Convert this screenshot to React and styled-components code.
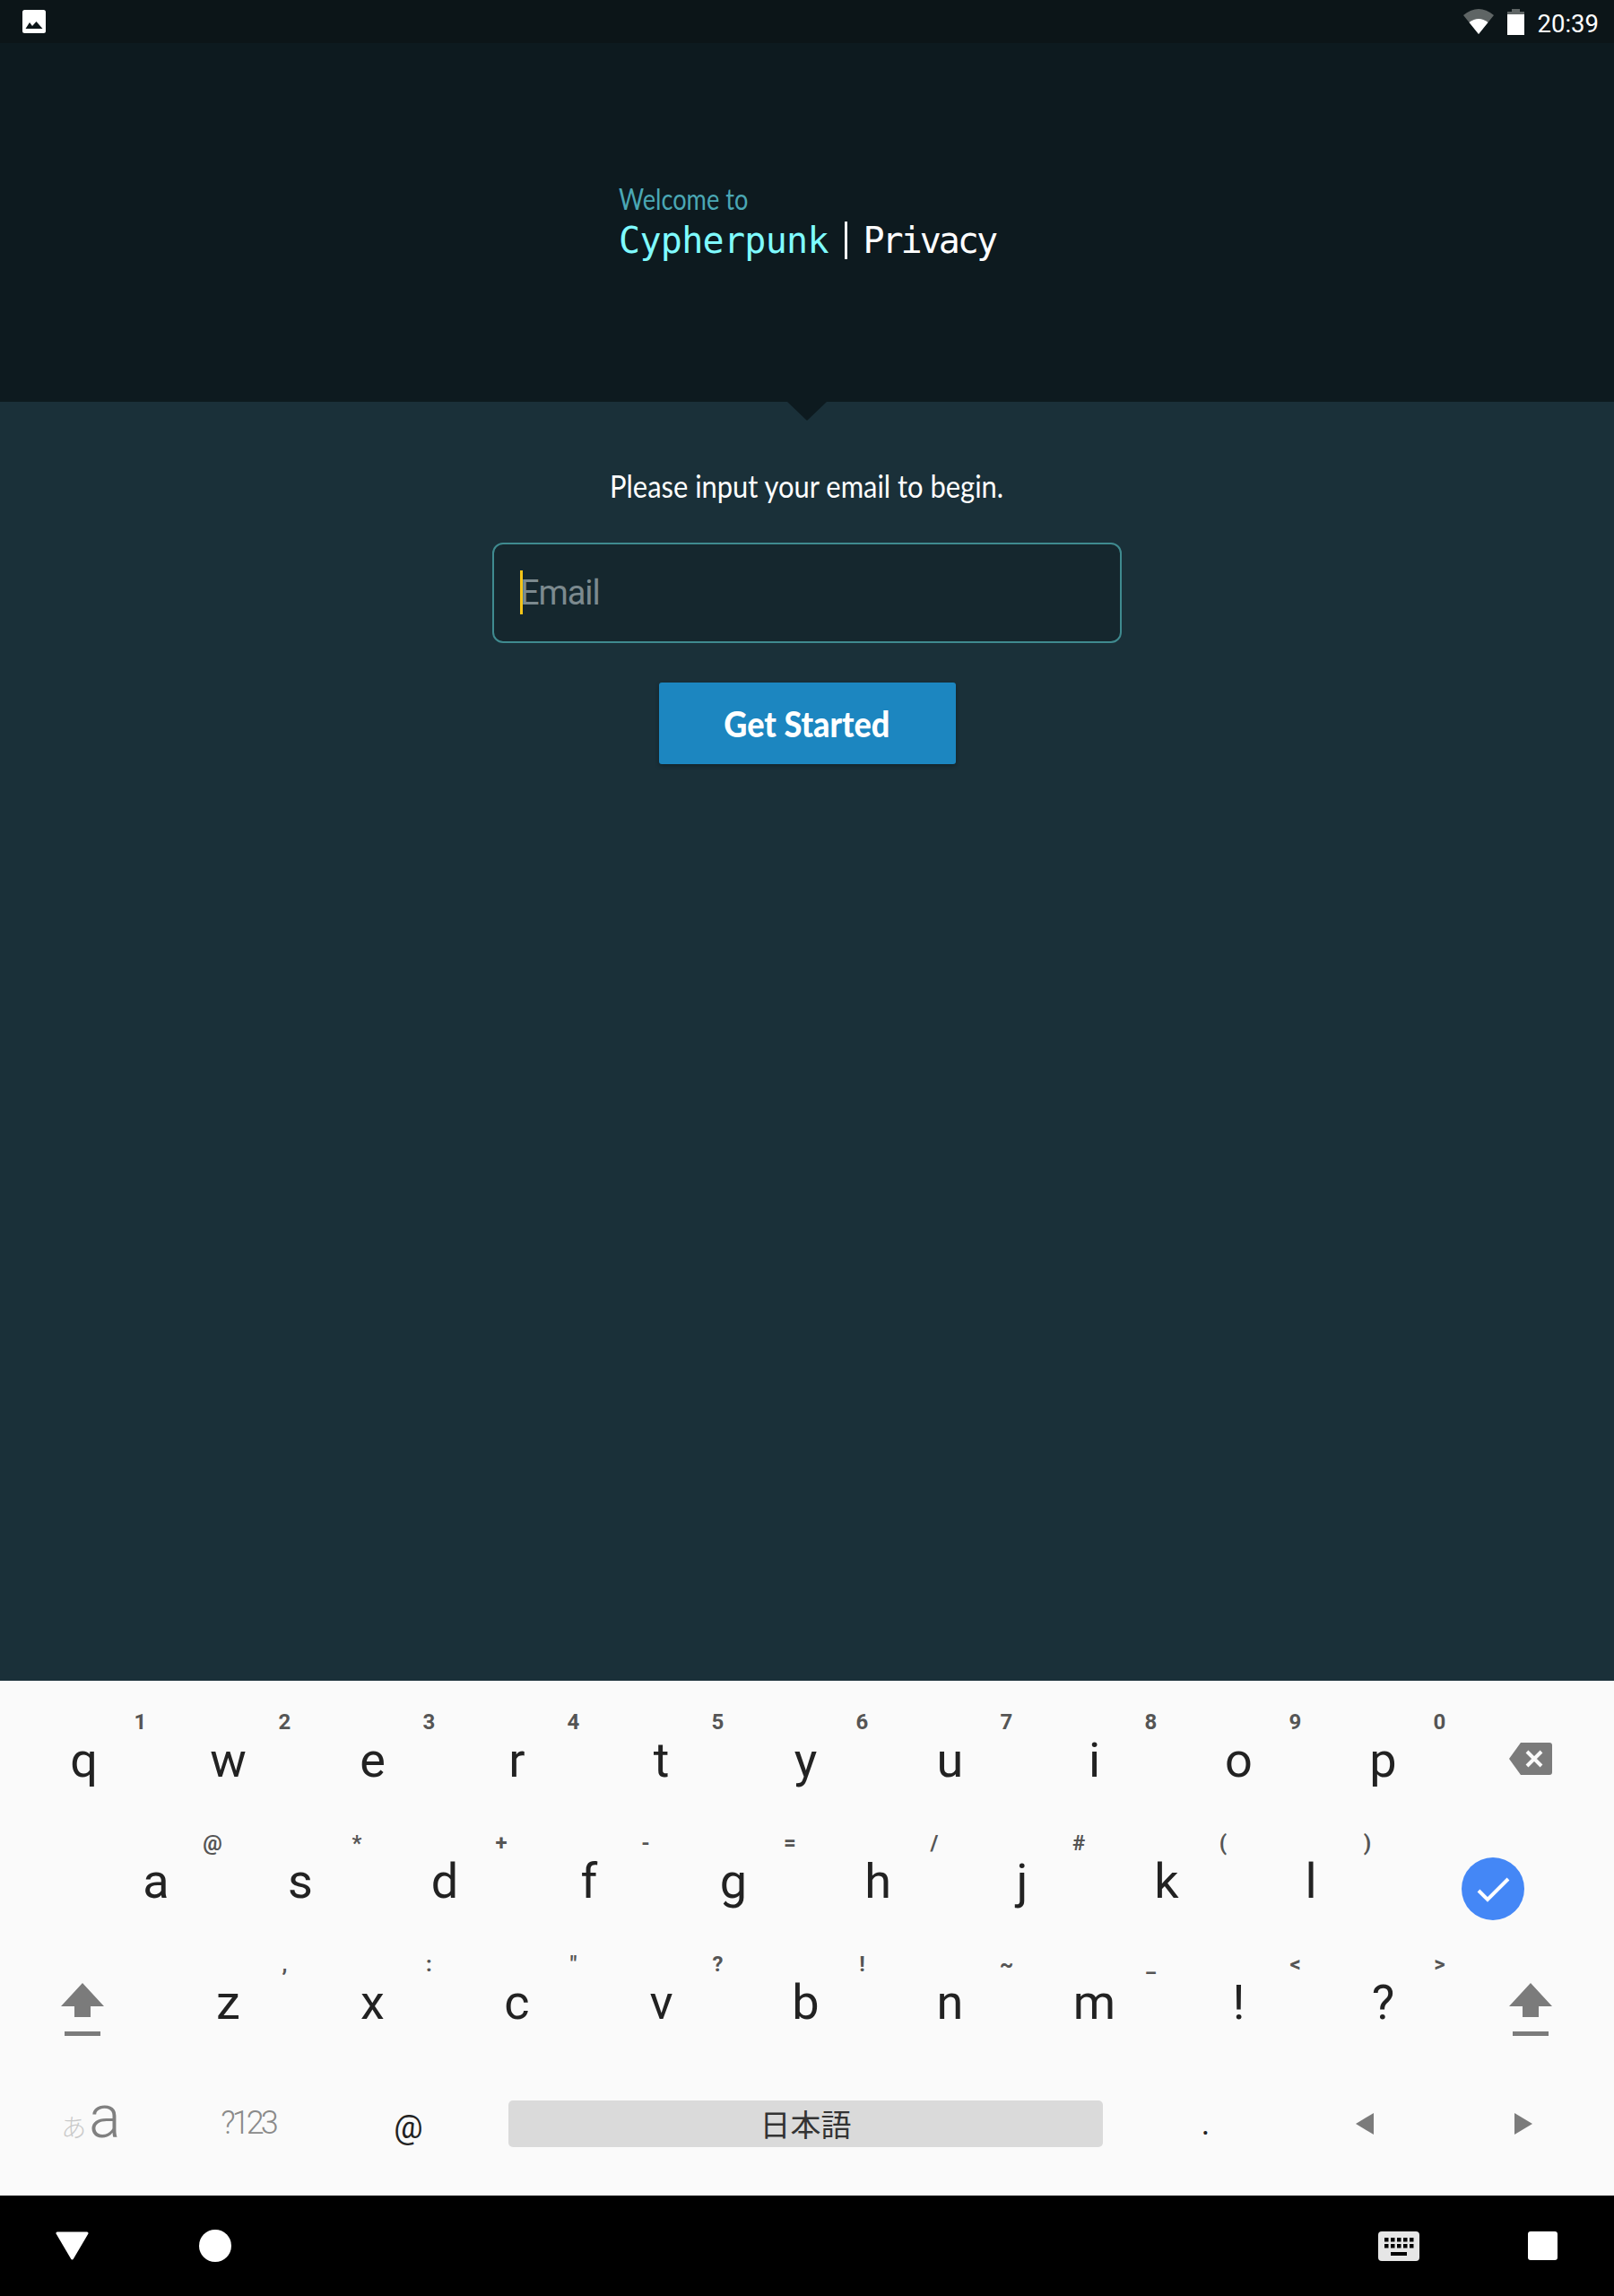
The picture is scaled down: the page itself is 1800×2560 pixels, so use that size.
import styled, { createGlobalStyle } from "styled-components";

const GlobalStyle = createGlobalStyle`
  html, body {
    margin: 0;
    padding: 0;
    background: #1a3039;
  }
  * {
    box-sizing: border-box;
  }
`;

const Page = styled.div`
  width: 1800px;
  height: 2560px;
  display: flex;
  flex-direction: column;
  font-family: Roboto, sans-serif;
  overflow: hidden;
`;

const StatusBar = styled.div`
  height: 48px;
  flex: none;
  background: #0c1518;
  display: flex;
  align-items: center;
  justify-content: space-between;
  padding: 0 17px 0 25px;
`;
const StatusRight = styled.div`
  display: flex;
  align-items: center;
`;
const Clock = styled.span`
  margin-left: 15px;
  padding-top: 5px;
  color: #fff;
  font-size: 27.5px;
  line-height: 46px;
`;

const Header = styled.header`
  position: relative;
  height: 400px;
  flex: none;
  background: #0d1a1f;
  display: flex;
  justify-content: center;
  padding-top: 155px;
  &::after {
    content: "";
    position: absolute;
    left: 878px;
    top: 100%;
    border-style: solid;
    border-width: 21px 22px 0;
    border-color: #0d1a1f transparent transparent;
  }
`;
const Logo = styled.div`
  width: 420px;
`;
const Welcome = styled.div`
  color: #4aa7b4;
  font-family: Lato, sans-serif;
  font-weight: 400;
  font-size: 32px;
  line-height: 38px;
  transform: scaleX(0.85);
  transform-origin: left;
`;
const Brand = styled.div`
  display: flex;
  align-items: baseline;
  height: 52px;
  margin-top: 1px;
  font-family: "DejaVu Sans Mono", monospace;
  font-size: 40px;
  line-height: 52px;
`;
const BrandName = styled.span`
  color: ${(p) => (p.$accent ? "#7ffbff" : "#ffffff")};
  letter-spacing: ${(p) => (p.$accent ? "-0.7px" : "-3px")};
`;
const BrandBar = styled.span`
  width: 4px;
  height: 42px;
  margin: 0 17px 0 18px;
  background: #fff;
  align-self: center;
`;

const Main = styled.main`
  flex: 1;
  background: #1a3039;
  display: flex;
  flex-direction: column;
  align-items: center;
  padding-top: 73px;
`;
const Prompt = styled.p`
  margin: 0 0 44px;
  color: #fff;
  font-family: Lato, sans-serif;
  font-weight: 400;
  font-size: 35px;
  line-height: 40px;
  transform: scaleX(0.883);
`;
const Field = styled.div`
  position: relative;
  width: 702px;
  height: 112px;
`;
const EmailInput = styled.input`
  width: 100%;
  height: 100%;
  padding: 0 0 0 29px;
  background: #15272e;
  border: 2px solid #3f8a8f;
  border-radius: 12px;
  outline: none;
  color: #fff;
  font-family: Roboto, sans-serif;
  font-weight: 400;
  font-size: 38px;
  letter-spacing: -1.1px;
  &::placeholder {
    color: #7c8a8f;
    opacity: 1;
  }
`;
const Caret = styled.span`
  position: absolute;
  left: 31px;
  top: 31px;
  width: 3px;
  height: 49px;
  background: #f5c518;
`;
const StartButton = styled.button`
  width: 331px;
  height: 91px;
  margin-top: 44px;
  border: none;
  border-radius: 3px;
  background: #1c86c0;
  box-shadow: 0 2px 5px rgba(0, 0, 0, 0.3);
  color: #fff;
  font-family: Lato, sans-serif;
  font-weight: 900;
  font-size: 40px;
`;
const StartLabel = styled.span`
  display: inline-block;
  transform: scaleX(0.9);
`;

const Keyboard = styled.section`
  height: 574px;
  flex: none;
  background: #fafafa;
  padding: 21px 13px 13px;
  color: #222;
`;
const KeyRow = styled.div`
  height: 135px;
  display: grid;
  grid-template-rows: 135px;
  grid-template-columns: ${(p) => p.$columns};
`;
const Key = styled.div`
  position: relative;
  display: flex;
  align-items: center;
  justify-content: center;
  font-size: 54px;
  line-height: 135px;
`;
const Hint = styled.span`
  position: absolute;
  left: calc(50% + 63px);
  top: 11px;
  transform: translateX(-50%);
  color: #555;
  font-size: 24px;
  font-weight: 700;
  line-height: 28px;
`;
const IconNudge = styled.div`
  display: flex;
  transform: translate(${(p) => p.$x || 0}px, ${(p) => p.$y || 0}px);
`;
const ImeKey = styled(Key)`
  align-items: baseline;
  font-weight: 300;
  color: #808080;
  font-size: 66px;
  line-height: 122px;
`;
const Kana = styled.span`
  margin-right: 3px;
  color: #c9c9c9;
  font-family: "Noto Sans CJK JP", sans-serif;
  font-size: 28px;
`;
const SymbolKey = styled(Key)`
  color: #8a8a8a;
  font-weight: 300;
  font-size: 36px;
  letter-spacing: -4px;
  padding-right: 4px;
`;
const SmallKey = styled(Key)`
  font-size: 36px;
  line-height: 1;
  padding-top: ${(p) => p.$top || 0}px;
`;
const SpaceBar = styled.div`
  height: 52px;
  margin: 0 26px 0 23px;
  align-self: center;
  border-radius: 5px;
  background: #dadada;
  color: #333;
  text-align: center;
  font-family: "Noto Sans CJK JP", sans-serif;
  font-size: 34px;
  line-height: 52px;
`;

const NavBar = styled.nav`
  height: 112px;
  flex: none;
  background: #000;
  display: flex;
  justify-content: space-between;
`;
const NavGroup = styled.div`
  display: flex;
`;
const NavSlot = styled.div`
  width: 160px;
  display: flex;
  align-items: center;
  justify-content: center;
`;

const PictureIcon = () => (
  <svg width="26" height="26" viewBox="0 0 26 26">
    <rect width="26" height="26" rx="2.5" fill="#fff" />
    <path d="M3.5 21 L8 14 L11 18 L15.5 13 L22.5 21 Z" fill="#0c1518" />
  </svg>
);
const WifiIcon = () => (
  <svg width="34" height="28" viewBox="0 0 34 28">
    <path d="M0 7 Q17 -7 34 7 L17 28 Z" fill="#5f6565" />
    <path d="M6.5 15 Q17 7 27.5 15 L17 28 Z" fill="#fff" />
  </svg>
);
const BatteryIcon = () => (
  <svg width="19" height="29" viewBox="0 0 19 29" style={{ marginLeft: 15 }}>
    <path d="M5 0 H14 V3 H19 V6 H0 V3 H5 Z" fill="#5f6565" />
    <rect y="6" width="19" height="23" fill="#fff" />
  </svg>
);
const ShiftIcon = () => (
  <svg width="48" height="59" viewBox="0 0 48 59">
    <path d="M24 0 L48 26 H33 V38 H15 V26 H0 Z" fill="#7b7b7b" />
    <rect x="4" y="54" width="40" height="5" fill="#7b7b7b" />
  </svg>
);
const BackspaceIcon = () => (
  <svg width="48" height="36" viewBox="0 0 48 36">
    <path
      d="M13 0 H45 Q48 0 48 3 V33 Q48 36 45 36 H13 L0 18 Z"
      fill="#7b7b7b"
    />
    <path d="M20 10 L36 26 M36 10 L20 26" stroke="#fafafa" strokeWidth="4" />
  </svg>
);
const EnterIcon = () => (
  <svg width="70" height="70" viewBox="0 0 70 70">
    <circle cx="35" cy="35" r="35" fill="#4487f6" />
    <path
      d="M19 37 L29 47 L52 24"
      fill="none"
      stroke="#fff"
      strokeWidth="4"
    />
  </svg>
);
const ArrowIcon = ({ left }) => (
  <svg width="20" height="24" viewBox="0 0 20 24">
    <path d={left ? "M20 0 V24 L0 12 Z" : "M0 0 V24 L20 12 Z"} fill="#7b7b7b" />
  </svg>
);
const BackIcon = () => (
  <svg width="37" height="32" viewBox="0 0 37 32">
    <path
      d="M2 2 H35 L18.5 30 Z"
      fill="#fff"
      stroke="#fff"
      strokeWidth="3"
      strokeLinejoin="round"
    />
  </svg>
);
const HomeIcon = () => (
  <svg width="36" height="36" viewBox="0 0 36 36">
    <circle cx="18" cy="18" r="18" fill="#fff" />
  </svg>
);
const KeyboardIcon = () => (
  <svg width="46" height="33" viewBox="0 0 46 33">
    <rect width="46" height="33" rx="4" fill="#e6e6e6" />
    {[0, 1].map((row) =>
      [0, 1, 2, 3, 4].map((col) => (
        <rect
          key={`${row}-${col}`}
          x={7 + col * 7}
          y={7 + row * 7}
          width="4.5"
          height="4.5"
          fill="#000"
        />
      ))
    )}
    <rect x="14" y="23" width="18" height="4" fill="#000" />
  </svg>
);
const RecentsIcon = () => (
  <svg width="33" height="32" viewBox="0 0 33 32">
    <rect width="33" height="32" rx="3" fill="#fff" />
  </svg>
);

const topRow = [
  ["q", "1"],
  ["w", "2"],
  ["e", "3"],
  ["r", "4"],
  ["t", "5"],
  ["y", "6"],
  ["u", "7"],
  ["i", "8"],
  ["o", "9"],
  ["p", "0"],
];
const middleRow = [
  ["a", "@"],
  ["s", "*"],
  ["d", "+"],
  ["f", "-"],
  ["g", "="],
  ["h", "/"],
  ["j", "#"],
  ["k", "("],
  ["l", ")"],
];
const bottomRow = [
  ["z", ","],
  ["x", ":"],
  ["c", '"'],
  ["v", "?"],
  ["b", "!"],
  ["n", "~"],
  ["m", "_"],
  ["!", "<"],
  ["?", ">"],
];

const renderKeys = (keys) =>
  keys.map(([label, hint]) => (
    <Key key={label}>
      {label}
      <Hint>{hint}</Hint>
    </Key>
  ));

const App = () => {
  return (
    <Page>
      <GlobalStyle />
      <StatusBar>
        <PictureIcon />
        <StatusRight>
          <WifiIcon />
          <BatteryIcon />
          <Clock>20:39</Clock>
        </StatusRight>
      </StatusBar>
      <Header>
        <Logo>
          <Welcome>Welcome to</Welcome>
          <Brand>
            <BrandName $accent>Cypherpunk</BrandName>
            <BrandBar />
            <BrandName>Privacy</BrandName>
          </Brand>
        </Logo>
      </Header>
      <Main>
        <Prompt>Please input your email to begin.</Prompt>
        <Field>
          <EmailInput type="text" placeholder="Email" readOnly />
          <Caret />
        </Field>
        <StartButton>
          <StartLabel>Get Started</StartLabel>
        </StartButton>
      </Main>
      <Keyboard>
        <KeyRow $columns="repeat(10, 161px) 1fr">
          {renderKeys(topRow)}
          <Key>
            <IconNudge $x={2} $y={-2}>
              <BackspaceIcon />
            </IconNudge>
          </Key>
        </KeyRow>
        <KeyRow $columns="80.5px repeat(9, 161px) 1fr">
          <div />
          {renderKeys(middleRow)}
          <Key>
            <IconNudge $y={8}>
              <EnterIcon />
            </IconNudge>
          </Key>
        </KeyRow>
        <KeyRow $columns="repeat(10, 161px) 1fr">
          <Key>
            <IconNudge $x={-2} $y={8}>
              <ShiftIcon />
            </IconNudge>
          </Key>
          {renderKeys(bottomRow)}
          <Key>
            <IconNudge $x={2} $y={8}>
              <ShiftIcon />
            </IconNudge>
          </Key>
        </KeyRow>
        <KeyRow $columns="177px 177px 177px 1fr 177px 177px 177px">
          <ImeKey>
            <Kana>あ</Kana>a
          </ImeKey>
          <SymbolKey>?123</SymbolKey>
          <SmallKey $top={9}>@</SmallKey>
          <SpaceBar>日本語</SpaceBar>
          <SmallKey $top={0}>.</SmallKey>
          <Key>
            <ArrowIcon left />
          </Key>
          <Key>
            <ArrowIcon />
          </Key>
        </KeyRow>
      </Keyboard>
      <NavBar>
        <NavGroup>
          <NavSlot>
            <BackIcon />
          </NavSlot>
          <NavSlot>
            <HomeIcon />
          </NavSlot>
        </NavGroup>
        <NavGroup>
          <NavSlot>
            <KeyboardIcon />
          </NavSlot>
          <NavSlot>
            <RecentsIcon />
          </NavSlot>
        </NavGroup>
      </NavBar>
    </Page>
  );
};

export default App;
